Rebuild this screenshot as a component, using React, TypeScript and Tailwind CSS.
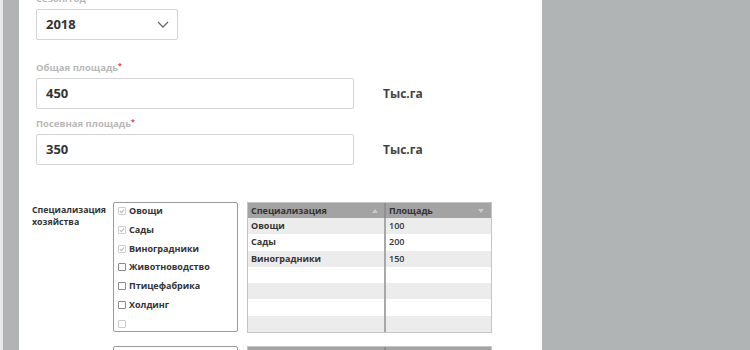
const specs = [
  { name: "Овощи", checked: true },
  { name: "Сады", checked: true },
  { name: "Виноградники", checked: true },
  { name: "Животноводство", checked: false },
  { name: "Птицефабрика", checked: false },
  { name: "Холдинг", checked: false },
];

const rows = [
  ["Овощи", "100"],
  ["Сады", "200"],
  ["Виноградники", "150"],
  ["", ""],
  ["", ""],
  ["", ""],
  ["", ""],
];

function Box({ checked, faint }: { checked?: boolean; faint?: boolean }) {
  return (
    <span
      className={`flex h-[8px] w-[8px] shrink-0 items-center justify-center rounded-[1px] border bg-white ${
        checked || faint ? "border-[#cfcfcf]" : "border-[#8a8a8a]"
      }`}
    >
      {checked && (
        <svg width="6" height="6" viewBox="0 0 7 7">
          <polyline points="1,3.6 2.8,5.4 6,1.6" fill="none" stroke="#bdbdbd" strokeWidth="1.3" />
        </svg>
      )}
    </span>
  );
}

function Field({ label, value }: { label: string; value: string }) {
  return (
    <div className="flex flex-col">
      <div className="h-[12px] text-[9.5px] font-bold leading-[12px] text-[#b8b8b8]">
        {label}
        <span className="relative -top-[3px] text-[7px] text-[#e0403a]">*</span>
      </div>
      <div className="mt-[4px] flex items-center">
        <div className="flex h-[31px] w-[318px] items-center rounded-[2px] border border-[#d4d4d4] pl-[9px] text-[13px] font-bold text-[#333]">
          {value}
        </div>
        <span className="ml-[29px] text-[12px] font-bold text-[#444]">Тыс.га</span>
      </div>
    </div>
  );
}

function Arrow({ up }: { up?: boolean }) {
  return (
    <svg width="6" height="4" viewBox="0 0 6 4">
      <polygon points={up ? "0,4 3,0 6,4" : "0,0 3,4 6,0"} fill="#c9c9c9" />
    </svg>
  );
}

export default function App() {
  return (
    <div className="flex h-[350px] w-[750px] overflow-hidden bg-[#b1b4b5] font-['Open_Sans',sans-serif]">
      <div className="w-[3px] bg-[#e8e9e9]" />
      <div className="w-[16px]" />
      <div className="w-[523px] bg-white">
        <div className="-mt-[7px] flex flex-col pl-[17px]">
          <div className="h-[12px] text-[9.5px] font-bold leading-[12px] text-[#b8b8b8]">Сезон/год</div>
          <div className="mt-[4px] flex h-[31px] w-[142px] items-center justify-between rounded-[2px] border border-[#d4d4d4] pl-[9px] pr-[8px] text-[13px] font-bold text-[#333]">
            2018
            <svg width="12" height="7" viewBox="0 0 12 7">
              <polyline points="1,1 6,6 11,1" fill="none" stroke="#6b6b6b" strokeWidth="1.3" />
            </svg>
          </div>
          <div className="mt-[22px]">
            <Field label="Общая площадь" value="450" />
          </div>
          <div className="mt-[9px]">
            <Field label="Посевная площадь" value="350" />
          </div>
        </div>

        <div className="mt-[37px] flex pl-[13px]">
          <div className="w-[81px] pt-[2px] text-[8.8px] font-bold leading-[12px] text-[#333]">
            Специализация
            <br />
            хозяйства
          </div>
          <div className="flex h-[130px] w-[125px] flex-col gap-[10.8px] rounded-[2px] border border-[#9a9a9a] pl-[4px] pt-[4px]">
            {specs.map((s) => (
              <div key={s.name} className="flex h-[8px] items-center gap-[3px]">
                <Box checked={s.checked} />
                <span className="text-[9px] font-bold leading-[8px] text-[#333]">{s.name}</span>
              </div>
            ))}
            <div className="flex h-[8px] items-center">
              <Box faint />
            </div>
          </div>
          <div className="ml-[9px] flex h-[131px] w-[245px] flex-col border border-[#c4c4c4]">
            <div className="flex h-[15px] bg-[#a3a3a3] text-[9px] font-bold leading-[15px] text-[#333]">
              <div className="flex w-[138px] items-center justify-between border-r-2 border-[#8f8f8f] pl-[3px] pr-[6px]">
                Специализация
                <Arrow up />
              </div>
              <div className="flex flex-1 items-center justify-between pl-[3px] pr-[7px]">
                Площадь
                <Arrow />
              </div>
            </div>
            {rows.map((r, i) => (
              <div
                key={i}
                className={`flex h-[16.3px] text-[9px] leading-[16px] text-[#333] ${i % 2 === 0 ? "bg-[#ececec]" : "bg-white"}`}
              >
                <div className="w-[138px] border-r-2 border-[#a8a8a8] pl-[3px] font-bold">{r[0]}</div>
                <div className="flex-1 pl-[3px] font-semibold">{r[1]}</div>
              </div>
            ))}
          </div>
        </div>

        <div className="mt-[13px] flex pl-[13px]">
          <div className="w-[81px] pl-[30px] pt-[2px] text-[8.8px] font-bold leading-[12px] text-[#333]">Культуры</div>
          <div className="flex h-[60px] w-[125px] flex-col rounded-[2px] border border-[#9a9a9a] pl-[4px] pt-[4px]">
            <div className="flex h-[8px] items-center gap-[3px]">
              <Box checked />
              <span className="text-[9px] font-bold leading-[8px] text-[#333]">Пшеница</span>
            </div>
          </div>
          <div className="ml-[9px] flex h-[60px] w-[245px] flex-col border border-[#c4c4c4]">
            <div className="flex h-[15px] bg-[#a3a3a3]">
              <div className="w-[138px] border-r-2 border-[#8f8f8f]" />
            </div>
          </div>
        </div>
      </div>
    </div>
  );
}
